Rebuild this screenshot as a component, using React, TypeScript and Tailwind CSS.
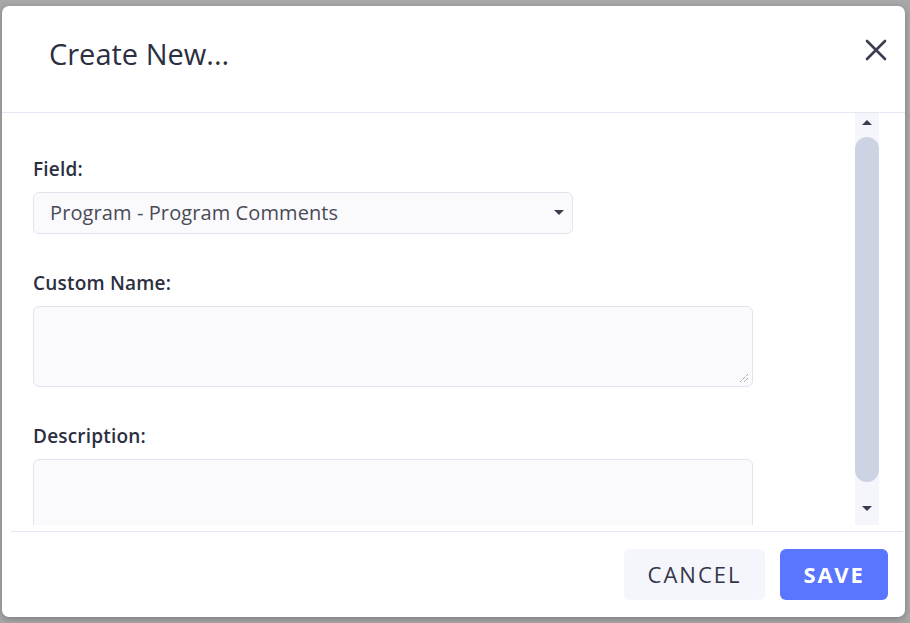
import React from "react";

const font = { fontFamily: "'Open Sans', Lato, sans-serif" };

function Caret({ up = false, className = "" }: { up?: boolean; className?: string }) {
  return (
    <svg width="10" height="6" viewBox="0 0 10 6" className={className}>
      {up ? <path d="M0 6 L5 1 L10 6 Z" fill="#3a3c4e" /> : <path d="M0 0 L10 0 L5 5 Z" fill="#3a3c4e" />}
    </svg>
  );
}

export default function App() {
  return (
    <div className="w-[910px] h-[623px] bg-[#a7a7a7] pt-[6px] pl-[2px] overflow-hidden" style={font}>
      <div className="w-[903px] h-[611px] bg-white rounded-[7px] flex flex-col overflow-hidden shadow-[0_2px_6px_rgba(0,0,0,0.25)]">
        {/* header */}
        <div className="h-[107px] flex items-center justify-between pl-[47px] pr-[18px] border-b border-[#e4e6f1] shrink-0">
          <h1 className="text-[29px] text-[#2c2f3f] font-normal pb-[10px]">Create New...</h1>
          <svg width="22" height="22" viewBox="0 0 22 22" className="mb-[19px]">
            <path d="M2 2 L20 20 M20 2 L2 20" stroke="#3a3d50" strokeWidth="2.6" strokeLinecap="round" />
          </svg>
        </div>
        {/* body */}
        <div className="flex h-[412px] shrink-0 pr-[26px]">
          <div className="flex-1 overflow-hidden pl-[31px] pt-[44px]">
            <label className="block text-[19px] font-semibold text-[#2c2f3f] leading-[24px] tracking-[0.2px]">Field:</label>
            <div className="mt-[11px] w-[540px] h-[42px] rounded-[6px] border border-[#e2e3ef] bg-[#fafafd] flex items-center justify-between pl-[16px] pr-[8px]">
              <span className="text-[20px] text-[#4a4b57] tracking-[0.1px]">Program - Program Comments</span>
              <Caret />
            </div>
            <label className="block mt-[37px] text-[19px] font-semibold text-[#2c2f3f] leading-[24px] tracking-[0.2px]">Custom Name:</label>
            <div className="mt-[11px] w-[720px] h-[81px] rounded-[6px] border border-[#e2e3ef] bg-[#fafafd] relative">
              <svg width="10" height="10" viewBox="0 0 10 10" className="absolute right-[3px] bottom-[3px]">
                <path d="M9 1 L1 9 M9 5 L5 9" stroke="#777" strokeWidth="1" strokeDasharray="1 1" />
              </svg>
            </div>
            <label className="block mt-[37px] text-[19px] font-semibold text-[#2c2f3f] leading-[24px] tracking-[0.2px]">Description:</label>
            <div className="mt-[11px] w-[720px] h-[81px] rounded-[6px] border border-[#e2e3ef] bg-[#fafafd]" />
          </div>
          <div className="w-[24px] bg-[#f5f6fb] flex flex-col items-center">
            <Caret up className="mt-[6px]" />
            <div className="mt-[12px] w-[24px] h-[345px] rounded-full bg-[#ccd3e3]" />
            <Caret className="mt-[24px]" />
          </div>
        </div>
        {/* footer */}
        <div className="mt-[6px] ml-[9px] mr-[2px] border-t border-[#e4e6f1] flex-1 flex justify-end items-start pt-[17px] pr-[15px] gap-[15px]">
          <button className="w-[141px] h-[51px] rounded-[6px] bg-[#f5f6fb] text-[#33364a] text-[22px] tracking-[2px] font-medium">CANCEL</button>
          <button className="w-[108px] h-[51px] rounded-[6px] bg-[#5b76fe] text-white text-[22px] tracking-[1.75px] font-bold">SAVE</button>
        </div>
      </div>
    </div>
  );
}
